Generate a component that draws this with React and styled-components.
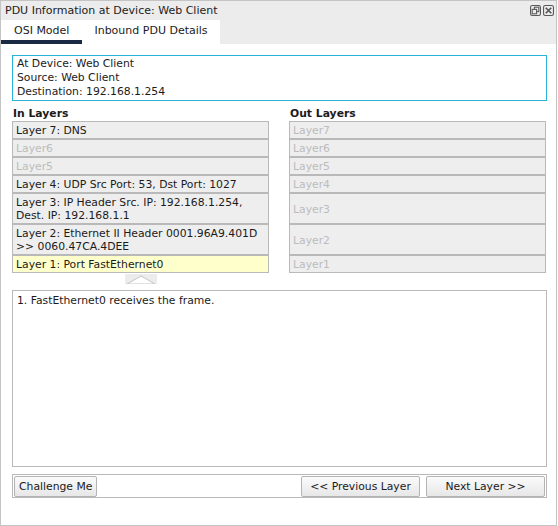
import React from "react";
import styled, { createGlobalStyle } from "styled-components";

const GlobalStyle = createGlobalStyle`
  html, body {
    margin: 0;
    padding: 0;
    background: #ffffff;
  }
  body {
    font-family: "DejaVu Sans", Verdana, sans-serif;
    color: #1b1b1b;
  }
`;

const inLayers = [
  { text: "Layer 7: DNS" },
  { text: "Layer6", off: true },
  { text: "Layer5", off: true },
  { text: "Layer 4: UDP Src Port: 53, Dst Port: 1027" },
  { text: "Layer 3: IP Header Src. IP: 192.168.1.254, Dest. IP: 192.168.1.1" },
  { text: "Layer 2: Ethernet II Header 0001.96A9.401D >> 0060.47CA.4DEE" },
  { text: "Layer 1: Port FastEthernet0", active: true },
];

const outLayers = ["Layer7", "Layer6", "Layer5", "Layer4", "Layer3", "Layer2", "Layer1"];

function App() {
  return (
    <>
      <GlobalStyle />
      <Window>
        <TitleBar>
          <Title>PDU Information at Device: Web Client</Title>
          <TitleIcons>
            <TitleIcon viewBox="0 0 10 10">
              <rect x="0.5" y="0.5" width="9" height="9" rx="1.5" fill="none" stroke="#5a5a5a" />
              <rect x="4" y="2" width="4" height="4" fill="none" stroke="#5a5a5a" />
              <rect x="2" y="4" width="4" height="4" fill="#ececec" stroke="#5a5a5a" />
            </TitleIcon>
            <TitleIcon viewBox="0 0 10 10">
              <rect x="0.5" y="0.5" width="9" height="9" rx="1.5" fill="none" stroke="#5a5a5a" />
              <path d="M2.5 2.5 L7.5 7.5 M7.5 2.5 L2.5 7.5" stroke="#5a5a5a" strokeWidth="1.6" />
            </TitleIcon>
          </TitleIcons>
        </TitleBar>
        <TabRow>
          <Tab $selected>OSI Model</Tab>
          <Tab>Inbound PDU Details</Tab>
        </TabRow>
        <Content>
          <InfoBox>
            <div>At Device: Web Client</div>
            <div>Source: Web Client</div>
            <div>Destination: 192.168.1.254</div>
          </InfoBox>
          <LayerGrid>
            <ColumnHeader>In Layers</ColumnHeader>
            <ColumnHeader>Out Layers</ColumnHeader>
            {inLayers.map((layer, i) => (
              <React.Fragment key={i}>
                <LayerCell $off={layer.off} $active={layer.active}>
                  {layer.text}
                </LayerCell>
                <LayerCell $off>{outLayers[i]}</LayerCell>
              </React.Fragment>
            ))}
          </LayerGrid>
          <ArrowRow>
            <ArrowBox viewBox="0 0 32 10">
              <rect x="0" y="0" width="32" height="10" fill="#ececec" />
              <path d="M2 10 L16 2 L30 10 Z" fill="#ffffff" stroke="#c4c4c4" />
            </ArrowBox>
          </ArrowRow>
          <Description>1. FastEthernet0 receives the frame.</Description>
          <ButtonBar>
            <Button>Challenge Me</Button>
            <Spacer />
            <Button $wide>&lt;&lt; Previous Layer</Button>
            <Button $wide>Next Layer &gt;&gt;</Button>
          </ButtonBar>
        </Content>
      </Window>
    </>
  );
}

export default App;

const Window = styled.div`
  width: 555px;
  height: 524px;
  border: 1px solid #c4c4c4;
  background: #ffffff;
  display: flex;
  flex-direction: column;
`;

const TitleBar = styled.div`
  height: 19px;
  background: #ececec;
  display: flex;
  align-items: center;
  justify-content: space-between;
  padding: 0 2px 0 4px;
`;

const Title = styled.div`
  font-size: 11px;
  color: #222;
`;

const TitleIcons = styled.div`
  display: flex;
  gap: 2px;
  align-items: center;
  margin-top: -1px;
`;

const TitleIcon = styled.svg`
  width: 11px;
  height: 11px;
`;

const TabRow = styled.div`
  height: 24px;
  background: #ececec;
  display: flex;
  align-items: stretch;
`;

const Tab = styled.div`
  background: #ffffff;
  font-size: 11px;
  padding: 0 ${(p) => (p.$selected ? "13px" : "12px")};
  display: flex;
  align-items: center;
  color: #1b1b1b;
  border-bottom: 4px solid ${(p) => (p.$selected ? "#1b2a44" : "#ffffff")};
`;

const Content = styled.div`
  padding: 11px 9px 0 11px;
  display: flex;
  flex-direction: column;
  font-size: 10.8px;
`;

const InfoBox = styled.div`
  border: 1px solid #2ab3d9;
  padding: 1px 4px 1px;
  line-height: 14px;
`;

const LayerGrid = styled.div`
  margin-top: 6px;
  display: grid;
  grid-template-columns: 257px 257px;
  column-gap: 20px;
  align-items: stretch;
`;

const ColumnHeader = styled.div`
  font-weight: bold;
  line-height: 14px;
  padding-left: 1px;
`;

const LayerCell = styled.div`
  border: 1px solid #b9b9b9;
  padding: 2px 4px 1px 3px;
  line-height: 13px;
  background: ${(p) => (p.$active ? "#ffffcc" : "#eeeeee")};
  color: ${(p) => (p.$off ? "#bcbcbc" : "#1b1b1b")};
  display: flex;
  align-items: center;
`;

const ArrowRow = styled.div`
  display: flex;
  padding-left: 113px;
  padding-top: 1px;
  height: 16px;
`;

const ArrowBox = styled.svg`
  width: 32px;
  height: 10px;
`;

const Description = styled.div`
  height: 169px;
  border: 1px solid #b9b9b9;
  padding: 3px 4px;
  line-height: 14px;
`;

const ButtonBar = styled.div`
  margin-top: 7px;
  border: 1px solid #b9b9b9;
  display: flex;
  gap: 5px;
  padding: 0 1px 0 0;
  height: 22px;
  align-items: center;
`;

const Spacer = styled.div`
  flex: 1;
`;

const Button = styled.div`
  height: 21px;
  box-sizing: border-box;
  border: 1px solid #b4b4b4;
  border-radius: 2px;
  background: linear-gradient(#fbfbfb, #e7e7e7);
  font-size: 10.8px;
  display: flex;
  align-items: center;
  justify-content: center;
  padding: 0 4px;
  width: ${(p) => (p.$wide ? "119px" : "auto")};
  margin-left: 1px;
`;
